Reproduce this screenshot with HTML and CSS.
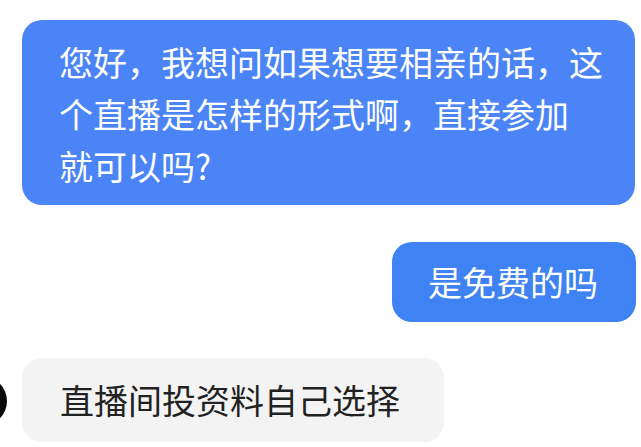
FILE: index.html
```html
<!DOCTYPE html>
<html>
<head>
	<meta charset="utf-8">
	<title>聊天</title>
	<link rel="stylesheet" href="styles.css">
</head>
<body>
<div class="chat">
	<div class="row mine">
		<div class="bubble blue first">您好，我想问如果想要相亲的话，这<br>个直播是怎样的形式啊，直接参加<br>就可以吗?</div>
	</div>
	<div class="row mine">
		<div class="bubble blue second">是免费的吗</div>
	</div>
	<div class="row other">
		<span class="avatar"></span>
		<div class="bubble grey">直播间投资料自己选择</div>
	</div>
</div>
</body>
</html>
```

FILE: styles.css
```css
body{
	margin:0;
	padding:0;
	background:#ffffff;
	font-family:"Noto Sans CJK SC", "Noto Sans", sans-serif;
	overflow:hidden;
}
.chat{
	display:flex;
	flex-direction:column;
	gap:37px;
	padding-top:20px;
}
.row{
	display:flex;
	align-items:center;
}
.row.mine{
	justify-content:flex-end;
	padding-right:5px;
}
.row.other{
	gap:15px;
}
.bubble{
	font-size:34px;
	line-height:52px;
	white-space:nowrap;
	border-radius:20px;
}
.bubble.blue{
	color:#ffffff;
	background:#4a84f6;
}
.bubble.first{
	width:576px;
	margin-right:1px;
	padding:16px 0 13px 37px;
}
.bubble.second{
	background:#3e82f3;
	padding:14px 38px 14px 36px;
}
.avatar{
	width:50px;
	height:50px;
	margin-left:-43px;
	border-radius:50%;
	background:#0a0a0a;
	flex:none;
}
.bubble.grey{
	color:#222222;
	background:#f3f3f4;
	padding:16px 44px 16px 38px;
	margin-top:-1px;
}
```
